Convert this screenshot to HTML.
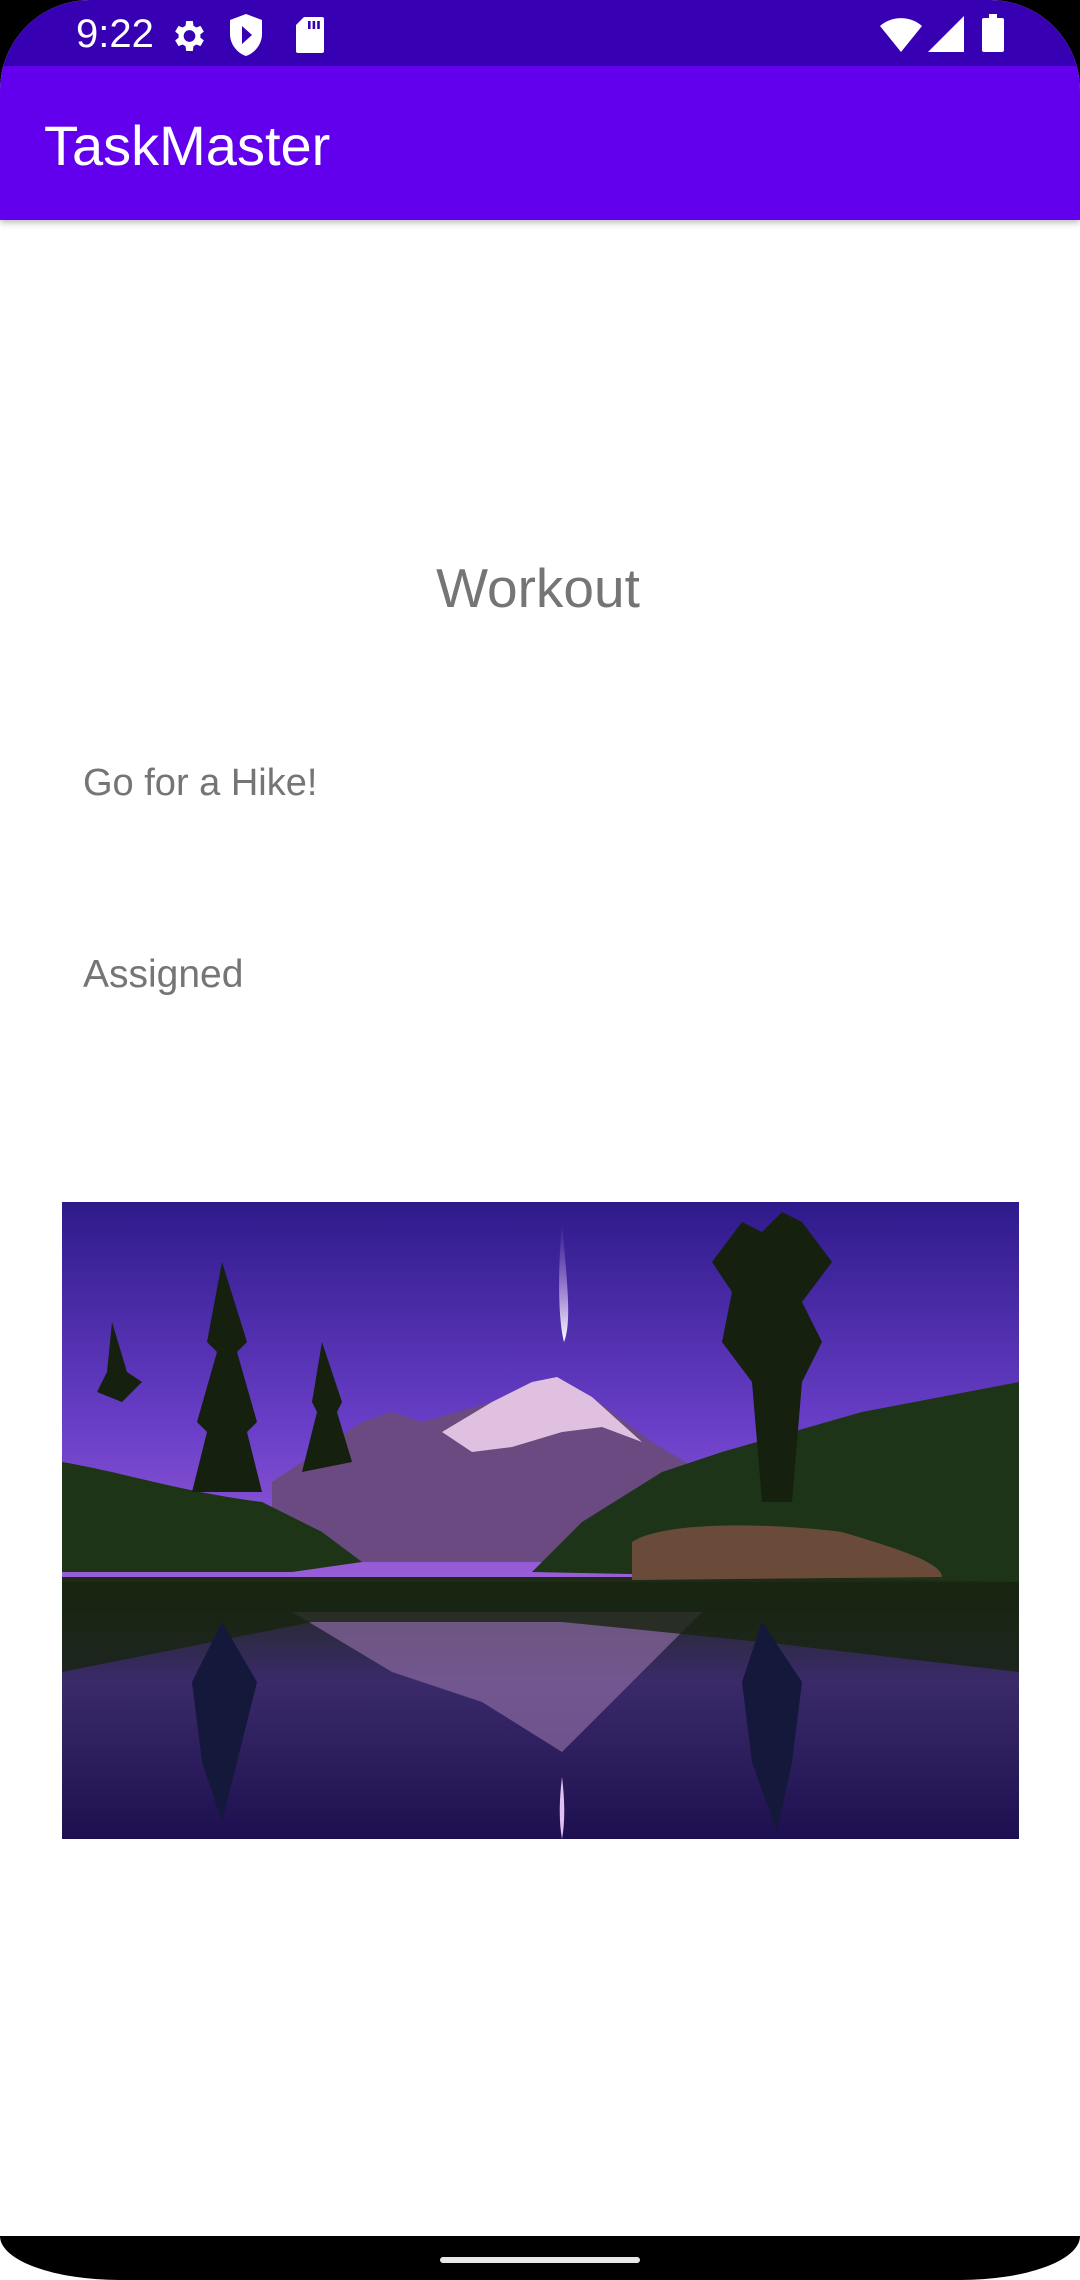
<!DOCTYPE html>
<html><head><meta charset="utf-8"><style>
html,body{margin:0;padding:0;background:#000;}
#p{position:relative;width:1080px;height:2280px;background:#fff;overflow:hidden;border-radius:90px 90px 0 0;font-family:"Liberation Sans",Roboto,sans-serif;}
#sb{position:absolute;left:0;top:0;width:1080px;height:66px;background:#3700b3;}
#ab{position:absolute;left:0;top:66px;width:1080px;height:154px;background:#6200ee;box-shadow:0 3px 6px rgba(0,0,0,.25);}
.t{position:absolute;white-space:nowrap;}
#nav{position:absolute;left:0;top:2236px;width:1080px;height:44px;background:#000;border-radius:0 0 120px 120px/0 0 44px 44px;}
</style></head><body><div id="p">
<div id="sb"></div>
<div class="t" style="left:76px;top:12px;font-size:40px;color:#fff;">9:22</div>
<svg class="t" style="left:168px;top:16px" width="40" height="40" viewBox="0 0 24 24"><path fill="#fff" d="M19.4 13a7.5 7.5 0 0 0 0-2l2.1-1.6-2-3.5-2.5 1a7 7 0 0 0-1.7-1L14.9 3h-4l-.4 2.9a7 7 0 0 0-1.7 1l-2.5-1-2 3.5L6.4 11a7.5 7.5 0 0 0 0 2l-2.1 1.6 2 3.5 2.5-1a7 7 0 0 0 1.7 1l.4 2.9h4l.4-2.9a7 7 0 0 0 1.7-1l2.5 1 2-3.5zM12.9 15.5a3.5 3.5 0 1 1 0-7 3.5 3.5 0 0 1 0 7z"/></svg>
<svg class="t" style="left:230px;top:14px" width="32" height="42" viewBox="0 0 16 21"><path fill="#fff" d="M8 0L0 3v7c0 5 3.5 9.5 8 11 4.5-1.5 8-6 8-11V3zM6 6l5 4.5L6 15z"/></svg>
<svg class="t" style="left:296px;top:17px" width="28" height="36" viewBox="0 0 14 18"><path fill="#fff" d="M4 0h9a1 1 0 0 1 1 1v16a1 1 0 0 1-1 1H1a1 1 0 0 1-1-1V4z"/><path fill="#3700b3" d="M6 2h1.3v4H6zM8.3 2h1.3v4H8.3zM10.6 2h1.3v4h-1.3z"/></svg>
<svg class="t" style="left:880px;top:16px" width="42" height="36" viewBox="0 0 21 18"><path fill="#fff" d="M10.5 18L0 5A16 16 0 0 1 21 5z"/></svg>
<svg class="t" style="left:928px;top:16px" width="36" height="36" viewBox="0 0 18 18"><path fill="#fff" d="M18 0V18H0z"/></svg>
<svg class="t" style="left:982px;top:14px" width="22" height="38" viewBox="0 0 11 19"><path fill="#fff" d="M3.5 0h4v2H10a1 1 0 0 1 1 1v15a1 1 0 0 1-1 1H1a1 1 0 0 1-1-1V3a1 1 0 0 1 1-1h2.5z"/></svg>
<div id="ab"></div>
<div class="t" style="left:44px;top:113px;font-size:56px;color:#fff;">TaskMaster</div>
<div class="t" style="left:0;width:1076px;text-align:center;top:556px;font-size:55px;color:#757575;">Workout</div>
<div class="t" style="left:83px;top:762px;font-size:38px;color:#757575;">Go for a Hike!</div>
<div class="t" style="left:83px;top:953px;font-size:39px;color:#757575;">Assigned</div>
<svg class="t" style="left:62px;top:1202px" width="957" height="637" viewBox="0 0 957 637" preserveAspectRatio="none">
<defs>
<linearGradient id="sky" x1="0" y1="0" x2="0" y2="1"><stop offset="0" stop-color="#2e1a8a"/><stop offset="0.6" stop-color="#6a3fc8"/><stop offset="1" stop-color="#9a5fd8"/></linearGradient>
<linearGradient id="wat" x1="0" y1="0" x2="0" y2="1"><stop offset="0" stop-color="#1e2a14"/><stop offset="0.4" stop-color="#3a2a6a"/><stop offset="1" stop-color="#1e1050"/></linearGradient>
<linearGradient id="com" x1="0" y1="0" x2="0" y2="1"><stop offset="0" stop-color="#b080e0" stop-opacity="0"/><stop offset="1" stop-color="#fff"/></linearGradient>
</defs>
<rect width="957" height="380" fill="url(#sky)"/>
<rect y="375" width="957" height="262" fill="url(#wat)"/>
<path d="M500 20 C505 80 510 120 502 140 C497 120 495 80 500 20z" fill="url(#com)"/>
<path d="M210 280 L300 220 L330 210 L360 220 L430 200 L470 180 L495 175 L530 195 L590 240 L640 270 L640 360 L210 360z" fill="#6a4a80"/>
<path d="M380 230 L430 200 L470 180 L495 175 L530 195 L580 240 L540 225 L500 230 L450 245 L410 250z" fill="#e0c0e0"/>
<path d="M0 260 C60 270 120 290 200 300 L260 330 L300 360 L230 370 L0 370z" fill="#1e3416"/>
<path d="M470 370 L520 320 L600 270 L660 250 L730 230 L800 210 L957 180 L957 380z" fill="#1e3418"/>
<path d="M570 340 C600 320 700 320 780 330 C830 345 880 360 880 375 L570 378z" fill="#6a4a38"/>
<path d="M680 20 L700 30 L720 10 L740 20 L770 60 L740 100 L760 140 L740 180 L730 300 L700 300 L690 180 L660 140 L670 90 L650 60z" fill="#15200f"/>
<path d="M160 60 L185 140 L175 150 L195 220 L185 230 L200 290 L130 290 L145 230 L135 220 L155 150 L145 140z" fill="#15200f"/>
<path d="M260 140 L280 200 L275 210 L290 260 L240 270 L255 210 L250 200z" fill="#15200f"/>
<path d="M50 120 L65 170 L80 180 L60 200 L35 190 L45 170z" fill="#15200f"/>
<path d="M230 410 L640 410 L590 460 L500 550 L420 500 L330 470z" fill="#8a6aa0" opacity="0.7"/>
<path d="M0 380 L957 380 L957 470 L700 440 L500 420 L250 420 L0 470z" fill="#16240e" opacity="0.8"/>
<path d="M160 420 L195 480 L175 560 L160 620 L140 560 L130 480z" fill="#14183a"/>
<path d="M700 420 L740 480 L730 560 L715 630 L690 560 L680 480z" fill="#14183a"/>
<path d="M500 575 C503 600 503 620 500 637 C497 620 497 600 500 575z" fill="#e0c0f0"/>
</svg>
<div id="nav"></div>
<div class="t" style="left:440px;top:2257px;width:200px;height:6px;border-radius:3px;background:#e8e8e8;"></div>
</div></body></html>
